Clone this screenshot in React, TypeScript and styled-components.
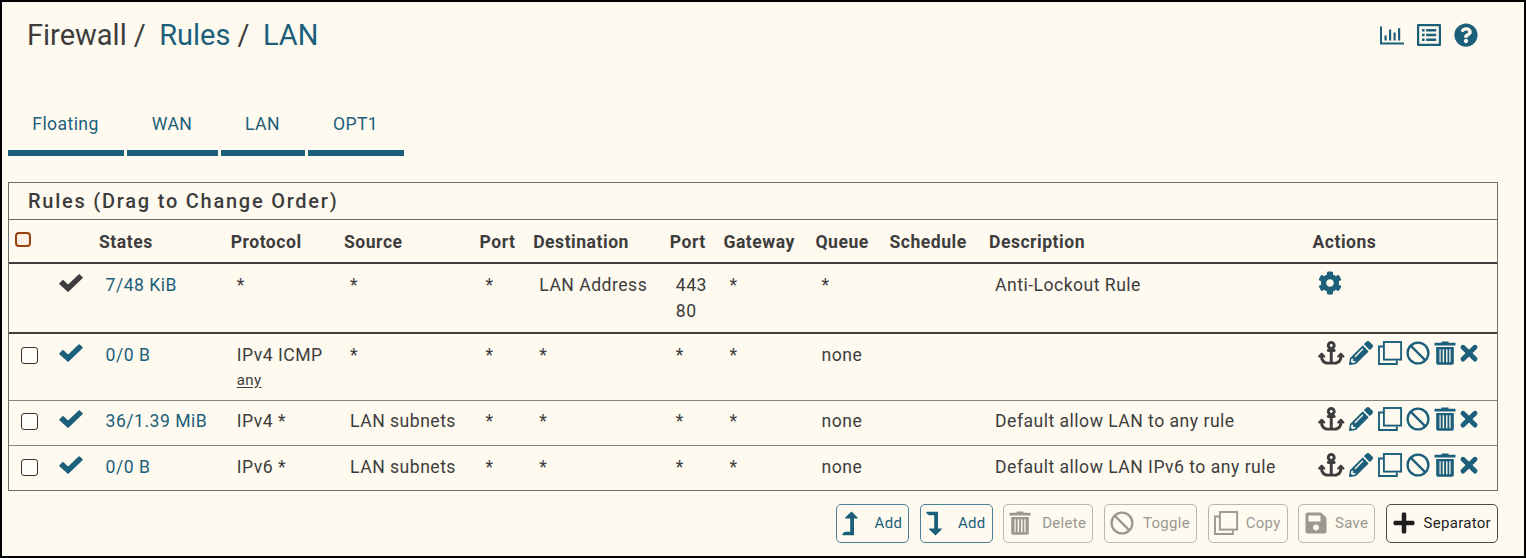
import React from "react";
import styled, { createGlobalStyle } from "styled-components";
import { FaAnchor } from "react-icons/fa6";
import { FaPencilAlt, FaQuestionCircle, FaCog, FaSave, FaPlus } from "react-icons/fa";

const teal = "#1b5f7a";
const ink = "#3d3d3d";
const cream = "#fffaf0";

const Global = createGlobalStyle`
  * { box-sizing: border-box; }
  body { margin: 0; background: ${cream}; font-family: Roboto, "Liberation Sans", sans-serif; color: ${ink}; }
  svg { display: block; flex: none; overflow: visible; }
`;

const Page = styled.main`
  width: 1526px;
  height: 558px;
  border: 2px solid #000;
  background: ${cream};
  padding: 0 26px 0 6px;
  overflow: hidden;
`;

const Header = styled.header`
  display: flex;
  justify-content: space-between;
  align-items: center;
  height: 66px;
  padding: 0 20px 0 19px;
`;

const Crumbs = styled.h1`
  display: flex;
  margin: 0;
  font-size: 29px;
  font-weight: 400;
  line-height: 37px;
`;

const Crumb = styled.span<{ $link?: boolean; $gap?: number }>`
  color: ${(p) => (p.$link ? teal : ink)};
  margin-right: ${(p) => p.$gap ?? 0}px;
`;

const HeaderIcons = styled.div`
  display: flex;
  align-items: center;
  gap: 13px;
  color: ${teal};
`;

const Tabs = styled.nav`
  display: flex;
  gap: 3px;
  height: 56px;
  margin-top: 32px;
`;

const Tab = styled.a<{ $width: number }>`
  width: ${(p) => p.$width}px;
  border-bottom: 6px solid ${teal};
  padding-right: 1px;
  color: ${teal};
  text-align: center;
  font-size: 17.6px;
  letter-spacing: 0.4px;
  line-height: 49px;
`;

const Panel = styled.section`
  margin-top: 26px;
  border: 1px solid #6d6d6b;
  height: 309px;
  font-size: 17.6px;
  letter-spacing: 0.48px;
`;

const PanelTitle = styled.h2`
  margin: 0;
  height: 37px;
  padding-left: 19px;
  border-bottom: 1px solid #6a6860;
  font-size: 20px;
  font-weight: 500;
  letter-spacing: 1.76px;
  line-height: 36px;
`;

const Row = styled.div<{ $height: number; $thick?: boolean; $last?: boolean }>`
  display: grid;
  grid-template-columns: 43px 47px 131.7px 113.3px 135.5px 53.7px 136.6px 53.7px 92px 74px 99.5px 323.5px 1fr;
  height: ${(p) => p.$height}px;
  border-bottom: ${(p) => (p.$last ? "none" : p.$thick ? `2px solid ${ink}` : "1px solid #87857f")};
`;

const HeadCell = styled.div`
  font-weight: 700;
  font-size: 17.6px;
  letter-spacing: 0.5px;
  line-height: 45px;
  white-space: nowrap;
`;

const Cell = styled.div<{ $link?: boolean; $lift?: number }>`
  padding: ${(p) => 8 - (p.$lift ?? 0)}px 0 0 ${(p) => (p.$link ? 6.6 : 6.1)}px;
  line-height: 26px;
  white-space: pre-line;
  color: ${(p) => (p.$link ? teal : ink)};
`;

const SubNote = styled.u`
  display: block;
  font-size: 15px;
  line-height: 25px;
  letter-spacing: 0.4px;
  text-underline-offset: 2px;
`;

const CheckCell = styled.div<{ $top: number; $left: number }>`
  padding: ${(p) => p.$top}px 0 0 ${(p) => p.$left}px;
`;

const Box = styled.span<{ $accent?: boolean }>`
  display: block;
  width: ${(p) => (p.$accent ? 16 : 17)}px;
  height: ${(p) => (p.$accent ? 15 : 17)}px;
  border: ${(p) => (p.$accent ? "2.5px solid #98400f" : "1.5px solid #333")};
  border-radius: ${(p) => (p.$accent ? 4 : 3)}px;
  background: ${(p) => (p.$accent ? "#fff1e6" : "#fffdf8")};
`;

const StatusCell = styled.div<{ $system?: boolean; $lift: number }>`
  padding: ${(p) => 10 - p.$lift}px 0 0 7px;
  color: ${(p) => (p.$system ? ink : teal)};
`;

const Actions = styled.div<{ $lift: number }>`
  display: flex;
  align-items: flex-start;
  padding: ${(p) => 7.3 - p.$lift}px 0 0 6px;
  color: ${teal};
  gap: 4.3px;
`;

const AnchorIcon = styled(FaAnchor)`
  width: 26.5px;
  height: 23.6px;
  color: ${ink};
`;

const Toolbar = styled.footer`
  display: flex;
  justify-content: flex-end;
  gap: 10.7px;
  padding-top: 13px;
`;

const Button = styled.button<{ $tone: "link" | "off" | "dark"; $width: number }>`
  display: flex;
  align-items: center;
  justify-content: space-between;
  width: ${(p) => p.$width}px;
  height: 39px;
  padding: 0 6px 1px 5px;
  border: 1px solid ${(p) => ({ link: "#4b8194", off: "#bab7b0", dark: "#4b4b4b" })[p.$tone]};
  border-radius: 5px;
  background: transparent;
  color: ${(p) => ({ link: teal, off: "#9b9892", dark: "#1d1d1d" })[p.$tone]};
  font: 400 15px/20px Roboto, "Liberation Sans", sans-serif;
  letter-spacing: 0.3px;
`;

const Check = () => (
  <svg width="24" height="18" viewBox="0 0 24 18" fill="currentColor">
    <path d="M.4 9.3 3.4 6.2q.6-.6 1.2 0L9.1 10.6 19.6.5q.6-.6 1.2 0l2.7 2.6q.6.6 0 1.2L9.7 17.6q-.6.6-1.2 0L.4 10.2q-.5-.5 0-.9Z" />
  </svg>
);

const Clone = () => (
  <svg width="24" height="24" viewBox="0 0 24 24" fill="none" stroke="currentColor" strokeWidth="1.9">
    <rect x="5.9" y="1" width="17.2" height="17.6" />
    <path d="M5 5.5H1V23h17.8v-3.5" />
  </svg>
);

const Ban = () => (
  <svg width="24" height="24" viewBox="0 0 24 24" fill="none" stroke="currentColor" strokeWidth="2.3">
    <circle cx="12" cy="12" r="10.4" />
    <path d="m4.6 4.6 14.8 14.8" />
  </svg>
);

const Trash = () => (
  <svg width="22" height="24" viewBox="0 0 22 24" fill="currentColor">
    <path d="M7.5.5h7v1.2H21.5V4.4H.5V1.7h7Z" />
    <path fillRule="evenodd" d="M2.2 6h17.6v16q0 1.7-1.7 1.7H3.9q-1.7 0-1.7-1.7ZM5.5 8.3v13h1.2v-13Zm3.2 0v13h1.4v-13Zm3.4 0v13h1.4v-13Zm3.2 0v13h1.3v-13Z" />
  </svg>
);

const Cross = () => (
  <svg width="18" height="24" viewBox="0 0 18 24" fill="none" stroke="currentColor" strokeWidth="4.9" strokeLinecap="round">
    <path d="m3 6.3 12 11.8M15 6.3 3 18.1" />
  </svg>
);

const Chart = () => (
  <svg width="24" height="19" viewBox="0 0 24 19" fill="currentColor">
    <path d="M0 .4h2V16.6h22v2H0ZM4.5 9.5h2.2V14.6H4.500ZM9 3.5h2.2V14.600H9ZM13.500 6.500h2.200V14.600h-2.200ZM18 2.200h2.200V14.600H18Z" />
  </svg>
);

const ListAlt = () => (
  <svg width="24" height="22" viewBox="0 0 24 22" fill="currentColor">
    <path fillRule="evenodd" d="M1 0h22q1 0 1 1v20q0 1-1 1H1q-1 0-1-1V1q0-1 1-1Zm1.2 2.2v17.6h19.6V2.2Z" />
    <path d="M5 5h2.6v2.6H5ZM5 9.7h2.6v2.6H5ZM5 14.4h2.6V17H5ZM9.2 5h10v2.6h-10ZM9.2 9.7h10v2.6h-10ZM9.2 14.4h10V17h-10Z" />
  </svg>
);

const LevelUp = () => (
  <svg width="16" height="25" viewBox="0 0 16 25" fill="currentColor">
    <path d="M9.5.5 15.6 6.6V7.6H12V24.3H1L0 23.3 2.8 20.8H8.2V7.6H3.2V6.6Z" />
  </svg>
);

const LevelDown = () => (
  <svg width="16" height="25" viewBox="0 0 16 25" fill="currentColor">
    <path d="M9.5 24.5 15.6 18.4V17.4H12V.7H1L0 1.7 2.8 4.2H8.2V17.4H3.2V18.4Z" />
  </svg>
);

const headings = ["States", "Protocol", "Source", "Port", "Destination", "Port", "Gateway", "Queue", "Schedule", "Description", "Actions"];

type Rule = {
  height: number;
  lift: number;
  states: string;
  protocol: string;
  note?: string;
  source: string;
  destination: string;
  port: string;
  queue: string;
  description: string;
  system?: boolean;
};

const rules: Rule[] = [
  { height: 70, lift: 0, states: "7/48 KiB", protocol: "*", source: "*", destination: "LAN Address", port: "443\n80", queue: "*", description: "Anti-Lockout Rule", system: true },
  { height: 67, lift: 0, states: "0/0 B", protocol: "IPv4 ICMP", note: "any", source: "*", destination: "*", port: "*", queue: "none", description: "" },
  { height: 45, lift: 1, states: "36/1.39 MiB", protocol: "IPv4 *", source: "LAN subnets", destination: "*", port: "*", queue: "none", description: "Default allow LAN to any rule" },
  { height: 44, lift: 0, states: "0/0 B", protocol: "IPv6 *", source: "LAN subnets", destination: "*", port: "*", queue: "none", description: "Default allow LAN IPv6 to any rule" },
];

const tabs: [string, number][] = [["Floating", 116], ["WAN", 91], ["LAN", 84], ["OPT1", 96]];

const RuleRow = ({ rule, last }: { rule: Rule; last: boolean }) => (
  <Row $height={rule.height} $thick={rule.system} $last={last}>
    <CheckCell $top={13 - rule.lift} $left={12}>{!rule.system && <Box />}</CheckCell>
    <StatusCell $system={rule.system} $lift={rule.lift}><Check /></StatusCell>
    <Cell $link $lift={rule.lift}>{rule.states}</Cell>
    <Cell $lift={rule.lift}>
      {rule.protocol}
      {rule.note && <SubNote>{rule.note}</SubNote>}
    </Cell>
    <Cell $lift={rule.lift}>{rule.source}</Cell>
    <Cell $lift={rule.lift}>*</Cell>
    <Cell $lift={rule.lift}>{rule.destination}</Cell>
    <Cell $lift={rule.lift}>{rule.port}</Cell>
    <Cell $lift={rule.lift}>*</Cell>
    <Cell $lift={rule.lift}>{rule.queue}</Cell>
    <Cell />
    <Cell $lift={rule.lift}>{rule.description}</Cell>
    <Actions $lift={rule.lift}>
      {rule.system ? (
        <FaCog size={24} />
      ) : (
        <>
          <AnchorIcon />
          <FaPencilAlt size={24} />
          <Clone />
          <Ban />
          <Trash />
          <Cross />
        </>
      )}
    </Actions>
  </Row>
);

export default function App() {
  return (
    <>
      <Global />
      <Page>
        <Header>
          <Crumbs>
            <Crumb $gap={7}>Firewall</Crumb>
            <Crumb $gap={13.5}>/</Crumb>
            <Crumb $link $gap={7}>Rules</Crumb>
            <Crumb $gap={13.5}>/</Crumb>
            <Crumb $link>LAN</Crumb>
          </Crumbs>
          <HeaderIcons>
            <Chart />
            <ListAlt />
            <FaQuestionCircle size={24} />
          </HeaderIcons>
        </Header>
        <Tabs>
          {tabs.map(([label, width]) => (
            <Tab key={label} $width={width}>{label}</Tab>
          ))}
        </Tabs>
        <Panel>
          <PanelTitle>Rules (Drag to Change Order)</PanelTitle>
          <Row $height={44} $thick>
            <CheckCell $top={12} $left={6}><Box $accent /></CheckCell>
            <span />
            {headings.map((h, i) => (
              <HeadCell key={i}>{h}</HeadCell>
            ))}
          </Row>
          {rules.map((rule, i) => (
            <RuleRow key={i} rule={rule} last={i === rules.length - 1} />
          ))}
        </Panel>
        <Toolbar>
          <Button $tone="link" $width={73}><LevelUp />Add</Button>
          <Button $tone="link" $width={72.7}><LevelDown />Add</Button>
          <Button $tone="off" $width={90}><Trash />Delete</Button>
          <Button $tone="off" $width={93}><Ban />Toggle</Button>
          <Button $tone="off" $width={80}><Clone />Copy</Button>
          <Button $tone="off" $width={77}><FaSave size={24} />Save</Button>
          <Button $tone="dark" $width={112}><FaPlus size={24} />Separator</Button>
        </Toolbar>
      </Page>
    </>
  );
}
